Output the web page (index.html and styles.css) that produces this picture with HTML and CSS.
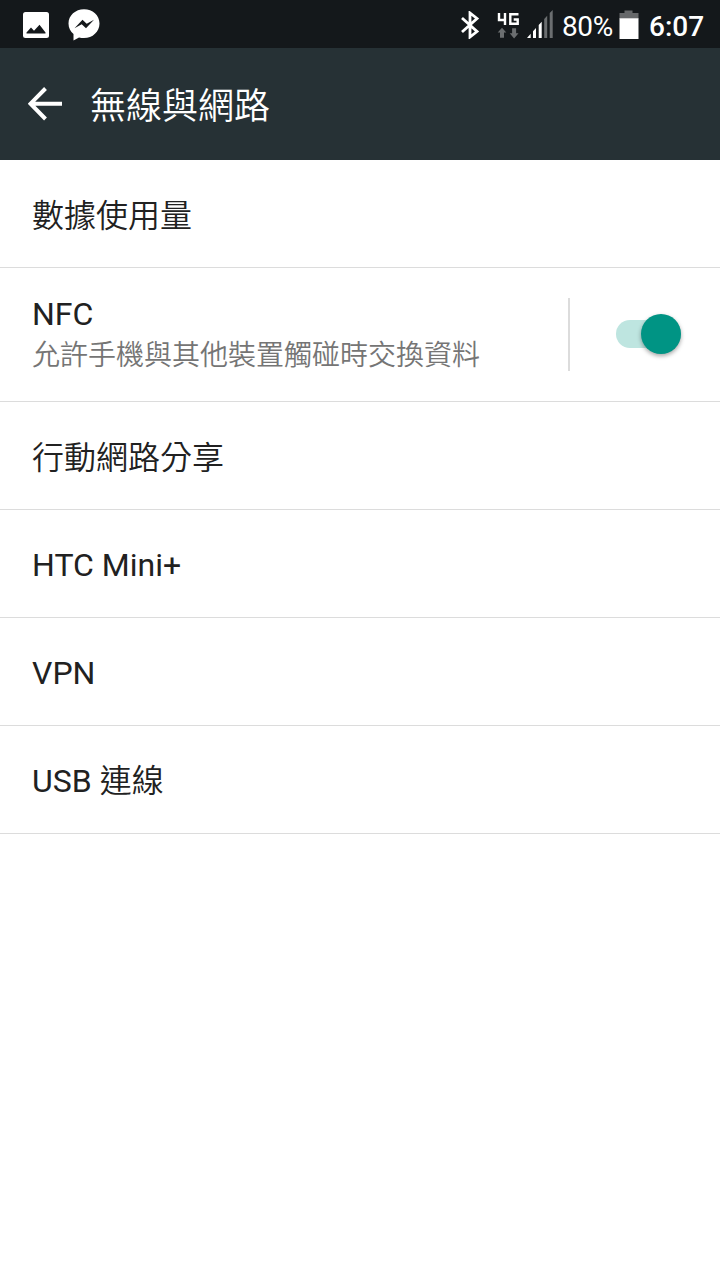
FILE: index.html
```html
<!DOCTYPE html>
<html lang="zh-Hant">
<head>
<meta charset="utf-8">
<title>無線與網路</title>
<link rel="stylesheet" href="styles.css">
</head>
<body>
<header class="status">
  <div class="notifications">
    <svg width="27" height="27" viewBox="0 0 27 27"><rect width="26" height="26" rx="2.5" fill="#fff"/><path d="M3.500 21.500V20.500L8 15.500l3 3.300 5.500-6.100 6 7.800v1z" fill="#14181b"/></svg>
    <svg width="32" height="32" viewBox="0 0 32 32"><path d="M16 .3C7.400.3.500 6.500.500 14.500c0 4.500 2 8 5 10.500v6.500l5.500-3c1.600.4 3.300.6 5 .6 8.600 0 15.500-6.400 15.500-14.600S24.600.3 16 .3z" fill="#fff"/><path d="M6.500 19.200 14.500 10.700l4.200 4 7.300-4L18 19.300l-4.300-4.100z" fill="#14181b"/></svg>
  </div>
  <div class="indicators">
    <svg class="bluetooth" width="20" height="28" viewBox="0 0 20 28"><path d="M2 7 17 20.500 10 26V2l7 5.500L2 21" fill="none" stroke="#fff" stroke-width="2.800"/></svg>
    <svg class="network" width="22" height="28" viewBox="0 0 22 28"><path d="M2 0v7H8.500M8 0v12M21.500 1.200h-8.200v9.600h7.400V6.500h-4" fill="none" stroke="#fff" stroke-width="2.400"/><path d="M5 14.800 9.300 19.500H7v5.300H3v-5.300H.700zM15.100 15.300h4v5H21.500l-4.400 5.200-4.400-5.200h2.400z" fill="#6b6e70"/></svg>
    <svg class="signal" width="26" height="28" viewBox="0 0 26 28"><path d="M0 28 3.700 23.800V28zM6 21.300l3-3.300v10H6zM11.700 15l3-3.300V28h-3z" fill="#fff"/><path d="m17.200 9 3-3.300V28h-3zM22.700 3l3-3v28h-3z" fill="#6b6e70"/></svg>
    <span class="percent">80%</span>
    <svg class="battery" width="20" height="30" viewBox="0 0 20 30"><path d="M.5 3H5.500V.5h8V3h6v6H.5z" fill="#66686a"/><path d="M.5 8.300h19V29H.5z" fill="#fff"/></svg>
    <span class="clock">6:07</span>
  </div>
</header>
<div class="appbar">
  <svg class="back" width="34" height="34" viewBox="0 0 34 34"><path d="M34 16.700H3M17.500 1.500 2.500 16.700l15 15.300" fill="none" stroke="#fff" stroke-width="4"/></svg>
  <h1 class="title cjk">無線與網路</h1>
</div>
<main class="list">
  <div class="row row-cjk"><span class="label cjk">數據使用量</span></div>
  <div class="row row-tall">
    <div class="text"><span class="label">NFC</span><span class="summary cjk">允許手機與其他裝置觸碰時交換資料</span></div>
    <div class="control"><div class="switch"><div class="thumb"></div></div></div>
  </div>
  <div class="row row-cjk"><span class="label cjk">行動網路分享</span></div>
  <div class="row"><span class="label">HTC Mini+</span></div>
  <div class="row"><span class="label">VPN</span></div>
  <div class="row row-cjk"><span class="label">USB <span class="cjk">連線</span></span></div>
</main>
</body>
</html>
```
FILE: styles.css
```css
* { box-sizing: border-box; }
body {
  margin: 0;
  min-height: 1280px;
  background: #fff;
  color: #212121;
  font-family: Roboto, "Noto Sans CJK TC", sans-serif;
}
svg { display: block; flex: none; }
.status {
  display: flex;
  justify-content: space-between;
  height: 48px;
  padding: 0 16px 0 23px;
  background: #14181b;
  color: #fff;
}
.notifications { display: flex; gap: 18px; padding-top: 2px; align-items: center; }
.indicators { display: flex; align-items: flex-start; }
.bluetooth { margin: 11px 17px 0 0; }
.network { margin: 13px 8px 0 0; }
.signal { margin: 10px 9px 0 0; }
.percent { width: 57px; font-size: 28px; line-height: 54px; letter-spacing: -0.4px; }
.battery { margin: 10px 10px 0 0; }
.clock { width: 55px; font-size: 28px; font-weight: 500; line-height: 54px; }
.appbar {
  display: flex;
  align-items: center;
  gap: 28px;
  height: 112px;
  padding-left: 28px;
  background: #263036;
  background: #263135;
  color: #fff;
}
.title { margin: 0; padding-bottom: 2px; font-size: 36px; line-height: 48px; }
.row {
  display: flex;
  align-items: center;
  height: 108px;
  padding: 3px 32px 0;
  border-bottom: 1px solid #dcdcdc;
}
.row-cjk { padding-top: 0; padding-bottom: 1px; }
.row-tall { height: 134px; justify-content: space-between; padding-top: 0; }
.label { font-size: 32px; line-height: 42px; }
.text { display: flex; flex-direction: column; margin-top: -3px; }
.summary { color: #757575; font-size: 28px; line-height: 36px; margin-bottom: 2px; }
.cjk { font-family: "Noto Sans CJK TC", sans-serif; font-weight: 350; }
.control {
  display: flex;
  align-items: center;
  width: 120px;
  height: 73px;
  padding: 0 0 1px 46px;
  border-left: 2px solid #dcdcdc;
}
.switch {
  display: flex;
  align-items: center;
  justify-content: flex-end;
  width: 65px;
  height: 28px;
  border-radius: 14px;
  background: #bee5e0;
}
.thumb {
  flex: none;
  width: 40px;
  height: 40px;
  border-radius: 50%;
  background: #009484;
  box-shadow: 0 2px 4px rgba(0, 0, 0, 0.35);
}
```
